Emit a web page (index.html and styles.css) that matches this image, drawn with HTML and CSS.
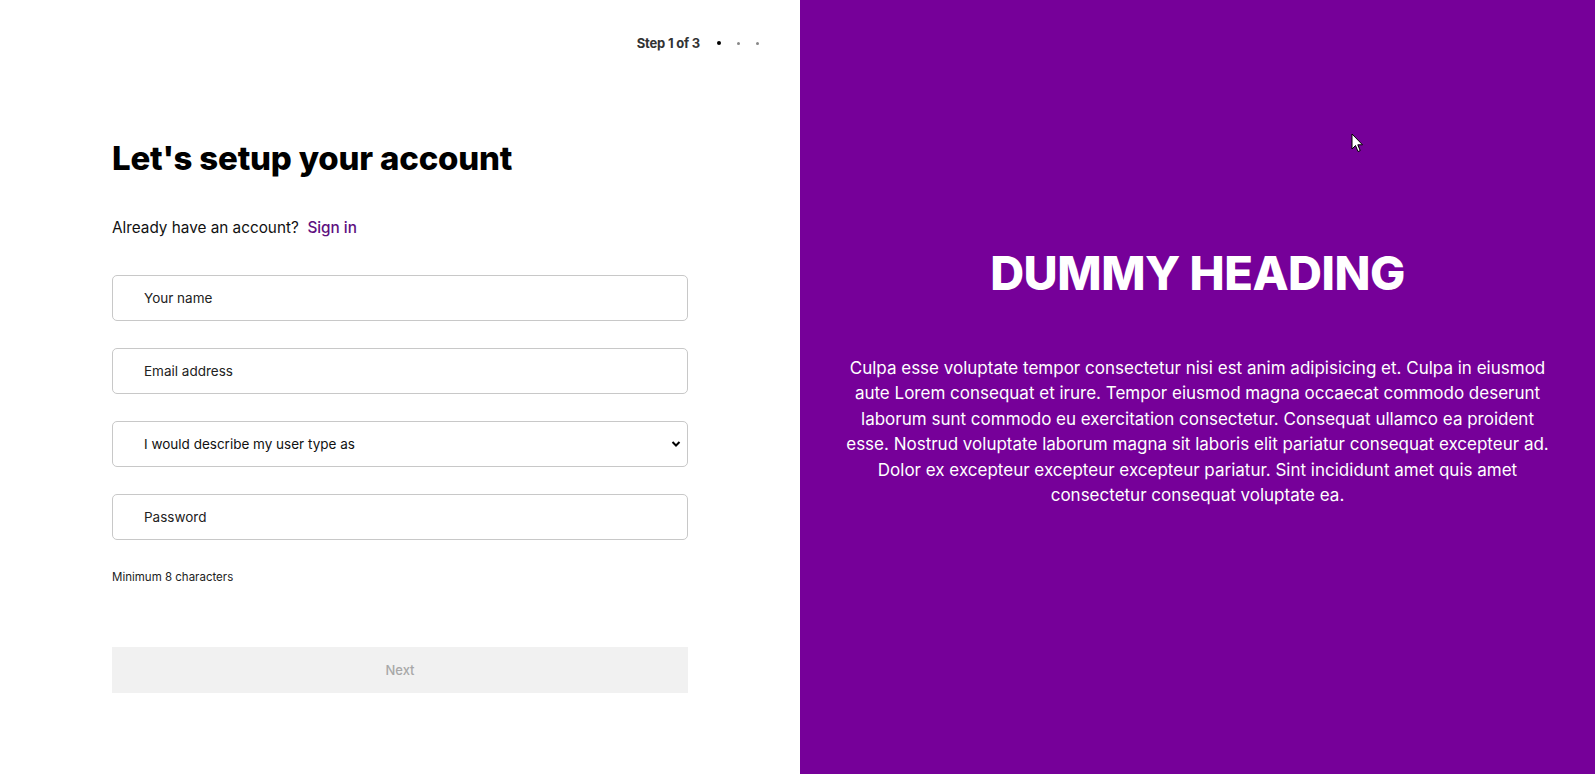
FILE: index.html
```html
<!DOCTYPE html>
<html lang="en">
<head>
<meta charset="utf-8">
<title>Setup account</title>
<link rel="stylesheet" href="styles.css">
</head>
<body>
<main class="page">
  <section class="left">
    <div class="steps">
      <span class="step-label">Step 1 of 3</span>
      <span class="dot dot-active"></span>
      <span class="dot"></span>
      <span class="dot"></span>
    </div>
    <div class="form">
      <h1 class="title">Let's setup your account</h1>
      <p class="signin">Already have an account?&nbsp; <a href="#" class="signin-link">Sign in</a></p>
      <div class="fields">
        <input class="field" type="text" placeholder="Your name">
        <input class="field" type="email" placeholder="Email address">
        <select class="field select">
          <option>I would describe my user type as</option>
        </select>
        <input class="field" type="password" placeholder="Password">
      </div>
      <p class="hint">Minimum 8 characters</p>
      <button class="next" type="button" disabled>Next</button>
    </div>
  </section>
  <section class="right">
    <h2 class="hero-title">DUMMY HEADING</h2>
    <p class="hero-text">Culpa esse voluptate tempor consectetur nisi est anim adipisicing et. Culpa in eiusmod aute Lorem consequat et irure. Tempor eiusmod magna occaecat commodo deserunt laborum sunt commodo eu exercitation consectetur. Consequat ullamco ea proident esse. Nostrud voluptate laborum magna sit laboris elit pariatur consequat excepteur ad. Dolor ex excepteur excepteur excepteur pariatur. Sint incididunt amet quis amet consectetur consequat voluptate ea.</p>
    <svg class="cursor" width="13" height="20" viewBox="0 0 13 20"><path d="M1 1 L1 16 L4.5 12.5 L7 18.5 L9.2 17.6 L6.8 11.8 L11.5 11.8 Z" fill="#fff" stroke="#000" stroke-width="1"/></svg>
  </section>
</main>
</body>
</html>
```

FILE: styles.css
```css
* { box-sizing: border-box; }
html, body { margin: 0; padding: 0; }
body {
  font-family: "Inter", "Noto Sans", sans-serif;
  color: #111;
  background: #fff;
}
.page {
  display: flex;
  height: 774px;
}
.left {
  width: 800px;
  flex-shrink: 0;
  background: #fff;
}
.steps {
  display: flex;
  justify-content: flex-end;
  align-items: center;
  height: 20px;
  margin-top: 33px;
  padding-right: 41px;
}
.step-label {
  font-size: 13px;
  font-weight: 700;
  color: #333;
  margin-right: 17px;
  letter-spacing: -0.2px;
}
.dot {
  width: 3px;
  height: 3px;
  border-radius: 50%;
  background: #888;
  margin-left: 16px;
}
.dot-active {
  width: 4px;
  height: 4px;
  background: #000;
  margin-left: 0;
}
.form {
  width: 576px;
  margin-left: 112px;
}
.title {
  margin: 86px 0 0;
  font-size: 33px;
  line-height: 38px;
  font-weight: 800;
  color: #000;
  letter-spacing: -0.2px;
}
.signin {
  margin: 40px 0 0;
  font-size: 15.3px;
  line-height: 22px;
  color: #111;
}
.signin-link {
  color: #5e0f80;
  text-decoration: none;
  font-weight: 500;
}
.fields {
  display: flex;
  flex-direction: column;
  gap: 27px;
  margin-top: 36px;
}
.field {
  width: 576px;
  height: 46px;
  border: 1px solid #c8c8c8;
  border-radius: 5px;
  padding: 0 12px 0 31px;
  font-family: inherit;
  font-size: 13.5px;
  color: #111;
  background: #fff;
  outline: none;
}
.field::placeholder { color: #222; opacity: 1; }
.select {
  appearance: none;
  -webkit-appearance: none;
  background-image: url("data:image/svg+xml;utf8,<svg xmlns='http://www.w3.org/2000/svg' width='10' height='8' viewBox='0 0 10 8'><path d='M1.5 2 L5 5.5 L8.5 2' fill='none' stroke='%23000' stroke-width='2'/></svg>");
  background-repeat: no-repeat;
  background-position: right 6px center;
}
.hint {
  margin: 29px 0 0;
  font-size: 11.5px;
  line-height: 16px;
  color: #222;
}
.next {
  display: block;
  width: 576px;
  height: 46px;
  margin-top: 62px;
  border: none;
  background: #f1f1f1;
  color: #a8a8a8;
  font-family: inherit;
  font-size: 13px;
  font-weight: 500;
}
.right {
  position: relative;
  flex: 1;
  background: #760099;
  color: #fff;
  display: flex;
  flex-direction: column;
  align-items: center;
  padding: 244px 40px 0;
}
.hero-title {
  margin: 0;
  font-size: 47px;
  line-height: 58px;
  font-weight: 800;
  letter-spacing: -0.5px;
}
.hero-text {
  margin: 54px 0 0;
  max-width: 715px;
  text-align: center;
  font-size: 17px;
  line-height: 25.4px;
}
.cursor {
  position: absolute;
  left: 551px;
  top: 133px;
}
```
